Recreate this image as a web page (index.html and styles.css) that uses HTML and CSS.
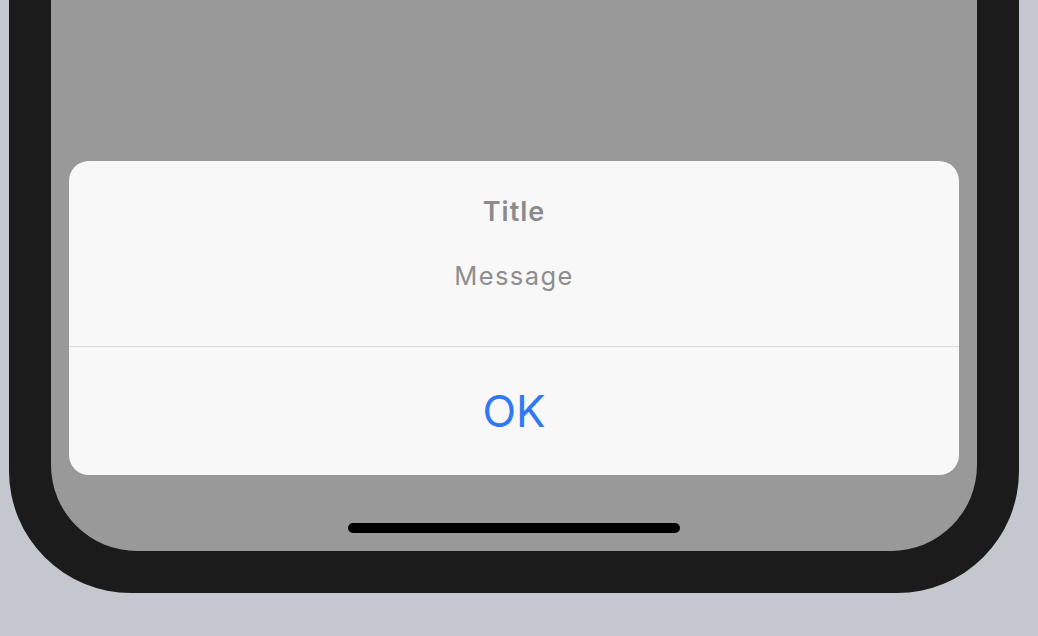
FILE: index.html
```html
<!DOCTYPE html>
<html>
<head>
<meta charset="utf-8">
<link rel="stylesheet" href="styles.css">
</head>
<body>
<div class="frame">
  <div class="screen">
    <div class="alert">
      <div class="alert-body">
        <div class="alert-title">Title</div>
        <div class="alert-message">Message</div>
      </div>
      <div class="alert-action">OK</div>
    </div>
    <div class="home-indicator"></div>
  </div>
</div>
</body>
</html>
```
FILE: styles.css
```css
html, body {
  margin: 0;
  padding: 0;
}
body {
  width: 1038px;
  height: 636px;
  overflow: hidden;
  background: #c5c7ce;
  font-family: Inter, "Noto Sans", sans-serif;
}
.frame {
  margin-left: 9px;
  width: 926px;
  padding: 0 42px 42px 42px;
  background: #1b1b1b;
  border-radius: 0 0 122px 122px;
}
.screen {
  height: 551px;
  background: #999999;
  border-radius: 0 0 86px 86px;
  display: flex;
  flex-direction: column;
  align-items: center;
  padding-top: 161px;
  box-sizing: border-box;
}
.alert {
  width: 890px;
  height: 314px;
  background: #f8f8f8;
  border-radius: 20px;
  display: flex;
  flex-direction: column;
  overflow: hidden;
}
.alert-body {
  height: 186px;
  box-sizing: border-box;
  padding-top: 37px;
  border-bottom: 1px solid #dcdcdc;
  text-align: center;
}
.alert-title {
  font-size: 27px;
  line-height: 27px;
  font-weight: 600;
  letter-spacing: 1px;
  color: #8b8b8b;
}
.alert-message {
  margin-top: 38px;
  font-size: 25.5px;
  line-height: 25px;
  letter-spacing: 1.4px;
  color: #8e8e8e;
}
.alert-action {
  flex: 1;
  display: flex;
  align-items: center;
  justify-content: center;
  font-size: 44px;
  line-height: 44px;
  color: #3079f5;
}
.home-indicator {
  margin-top: 48px;
  width: 332px;
  height: 10px;
  border-radius: 5px;
  background: #000;
}
```
